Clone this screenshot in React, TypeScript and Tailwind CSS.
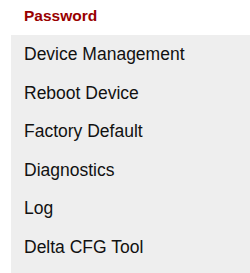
import React from "react";

const items = [
  "Device Management",
  "Reboot Device",
  "Factory Default",
  "Diagnostics",
  "Log",
  "Delta CFG Tool",
];

export default function App() {
  return (
    <div className="w-[250px] h-[273px] bg-white overflow-hidden font-['Liberation_Sans',Arial,sans-serif]">
      <div className="pl-6 h-[35px] leading-[32px] text-[15.5px] font-bold text-[#990000]">
        Password
      </div>
      <ul className="ml-[11px] pl-[13px] bg-[#eeeeee] h-[238px]">
        {items.map((item) => (
          <li key={item} className="h-[38.5px] leading-[38.5px] text-[17.5px] text-[#111111]">
            {item}
          </li>
        ))}
      </ul>
    </div>
  );
}
